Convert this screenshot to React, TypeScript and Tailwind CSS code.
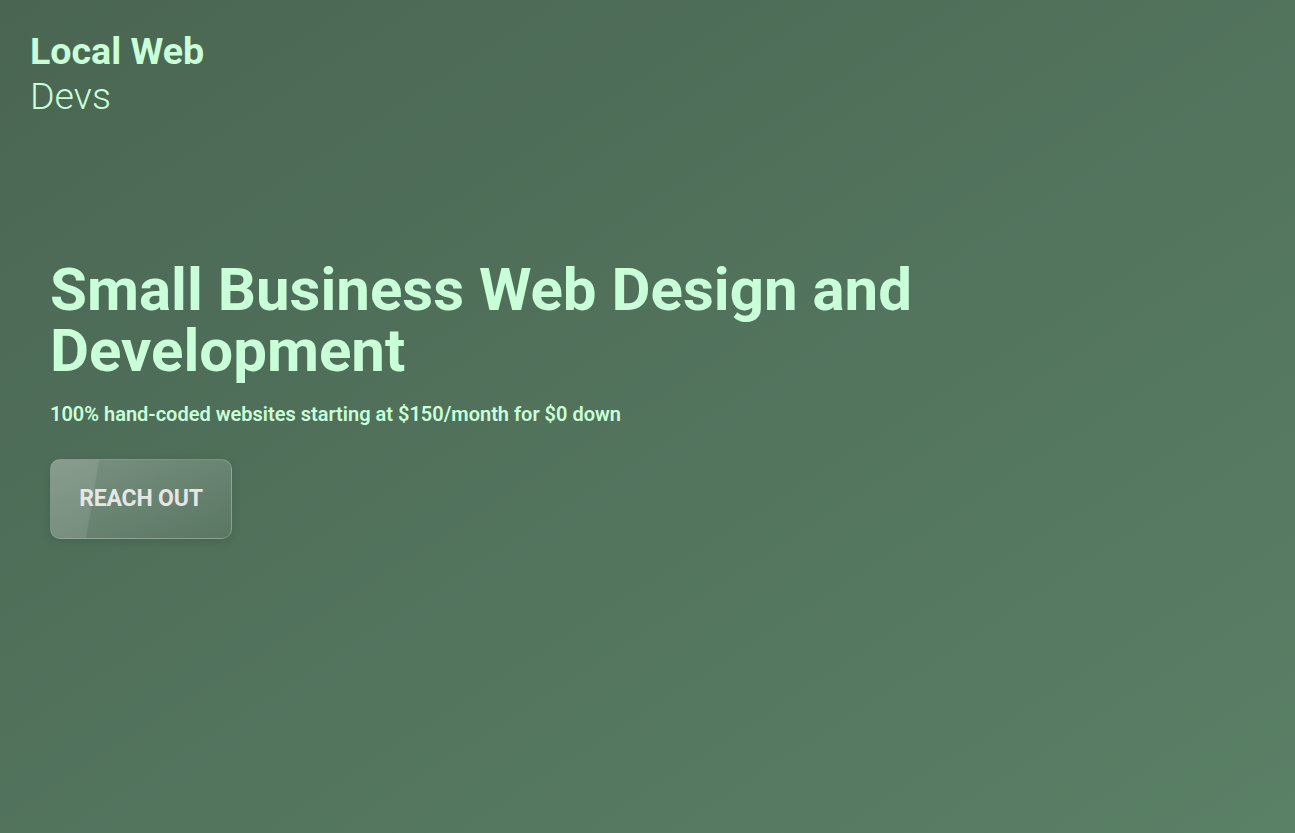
import React from "react";

export default function App() {
  return (
    <div
      className="w-full min-h-[833px] bg-gradient-to-br from-[#4a6653] to-[#5a8066] text-[#c9ffd8]"
      style={{ fontFamily: "Roboto, 'Noto Sans', sans-serif" }}
    >
      <header className="pl-[30px] pt-[29px]">
        <div className="text-[37.6px] leading-[45px] font-bold">Local Web</div>
        <div className="text-[37.6px] leading-[45px] font-light">Devs</div>
      </header>
      <section className="pl-[50px] pt-[140px]">
        <h1 className="text-[60px] leading-[61px] font-bold max-w-[960px]">
          Small Business Web Design and Development
        </h1>
        <p className="mt-[19px] text-[20px] leading-[28px] font-semibold">
          100% hand-coded websites starting at $150/month for $0 down
        </p>
        <button className="relative mt-[31px] w-[182px] h-[80px] rounded-[10px] overflow-hidden border border-white/20 bg-gradient-to-br from-white/25 to-white/5 shadow-[0_2px_10px_rgba(0,0,0,0.12)]">
          <span
            className="absolute inset-0 bg-white/10"
            style={{ clipPath: "polygon(0 0, 48px 0, 35px 100%, 0 100%)" }}
          />
          <span className="relative text-[23px] font-bold text-[#e6e6e6] tracking-[-0.2px]">
            REACH OUT
          </span>
        </button>
      </section>
    </div>
  );
}
